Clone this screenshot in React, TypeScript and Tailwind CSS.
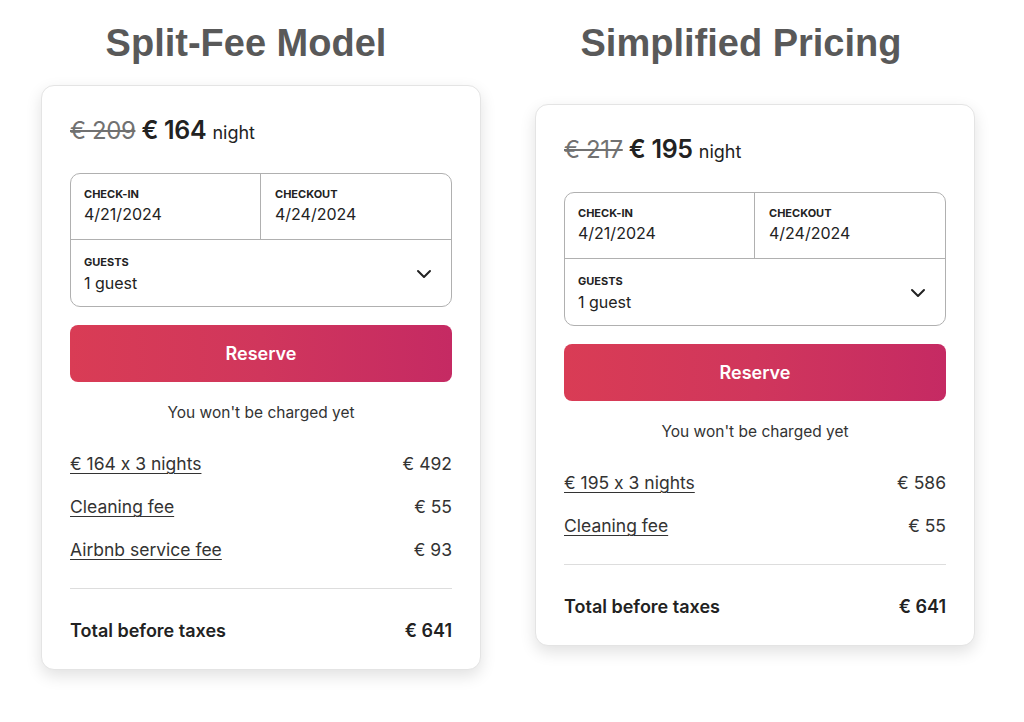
import React from 'react';

interface Fee {
  label: string;
  amount: string;
}

interface BookingCardProps {
  oldPrice: string;
  price: string;
  fees: Fee[];
  total: string;
}

const ChevronDown: React.FC = () => (
  <svg width="16" height="16" viewBox="0 0 32 32" fill="none" stroke="#222" strokeWidth="4" strokeLinecap="round" strokeLinejoin="round">
    <path d="M28 12 16 24 4 12" />
  </svg>
);

const BookingCard: React.FC<BookingCardProps> = ({ oldPrice, price, fees, total }) => {
  return (
    <div className="w-[440px] bg-white border border-[#e4e4e4] rounded-[13px] shadow-[0_6px_16px_rgba(0,0,0,0.12)] px-[28px] pt-[30px] pb-[26px] text-[#222]">
      <div className="flex items-baseline h-[28px] leading-[28px]">
        <span className="text-[24px] text-[#717171] line-through decoration-[2px] tracking-[-0.4px]">{oldPrice}</span>
        <span className="ml-[6px] text-[25px] font-semibold tracking-[-0.3px]">{price}</span>
        <span className="ml-[6px] text-[18px]">night</span>
      </div>

      <div className="mt-[29px] border border-[#b0b0b0] rounded-[10px]">
        <div className="grid grid-cols-2 border-b border-[#b0b0b0] h-[66px]">
          <div className="pl-[13px] pt-[13px] border-r border-[#b0b0b0]">
            <div className="text-[11px] font-bold leading-[14px]">CHECK-IN</div>
            <div className="text-[16px] leading-[20px] mt-[3px]">4/21/2024</div>
          </div>
          <div className="pl-[14px] pt-[13px]">
            <div className="text-[11px] font-bold leading-[14px]">CHECKOUT</div>
            <div className="text-[16px] leading-[20px] mt-[3px]">4/24/2024</div>
          </div>
        </div>
        <div className="flex items-center justify-between pl-[13px] pr-[19px] h-[66px]">
          <div className="pt-[1px]">
            <div className="text-[11px] font-bold leading-[14px]">GUESTS</div>
            <div className="text-[16px] leading-[20px] mt-[4px]">1 guest</div>
          </div>
          <ChevronDown />
        </div>
      </div>

      <button className="mt-[18px] w-full h-[57px] rounded-[8px] bg-[linear-gradient(to_right,#d93c55,#d0365c_50%,#c52a63)] text-white text-[18px] font-semibold">
        Reserve
      </button>

      <p className="mt-[21px] text-center text-[15.5px] leading-[20px] text-[#333]">You won't be charged yet</p>

      <div className="mt-[29px] flex flex-col gap-[19px]">
        {fees.map((fee) => (
          <div key={fee.label} className="flex justify-between text-[17.5px] leading-[24px] text-[#333]">
            <span className="underline underline-offset-[3px] decoration-[1px]">{fee.label}</span>
            <span>{fee.amount}</span>
          </div>
        ))}
      </div>

      <div className="mt-[26px] border-t border-[#dddddd]" />

      <div className="mt-[30px] flex justify-between text-[18px] leading-[24px] font-semibold">
        <span>Total before taxes</span>
        <span>{total}</span>
      </div>
    </div>
  );
};

export default function App() {
  return (
    <div className="w-[1024px] h-[722px] bg-white flex items-start pl-[41px] gap-[54px] font-['Inter','Noto_Sans',sans-serif] [font-feature-settings:'calt'_0]">
      <div className="flex flex-col">
        <h1 className="text-center pr-[30px] pt-[21px] h-[85px] text-[38px] leading-[44px] font-bold text-[#595959] font-['Liberation_Sans',Arial,sans-serif]">
          Split-Fee Model
        </h1>
        <BookingCard
          oldPrice="€ 209"
          price="€ 164"
          fees={[
            { label: '€ 164 x 3 nights', amount: '€ 492' },
            { label: 'Cleaning fee', amount: '€ 55' },
            { label: 'Airbnb service fee', amount: '€ 93' },
          ]}
          total="€ 641"
        />
      </div>
      <div className="flex flex-col">
        <h1 className="text-center pr-[28px] pt-[21px] h-[104px] text-[38px] leading-[44px] font-bold text-[#595959] font-['Liberation_Sans',Arial,sans-serif]">
          Simplified Pricing
        </h1>
        <BookingCard
          oldPrice="€ 217"
          price="€ 195"
          fees={[
            { label: '€ 195 x 3 nights', amount: '€ 586' },
            { label: 'Cleaning fee', amount: '€ 55' },
          ]}
          total="€ 641"
        />
      </div>
    </div>
  );
}
